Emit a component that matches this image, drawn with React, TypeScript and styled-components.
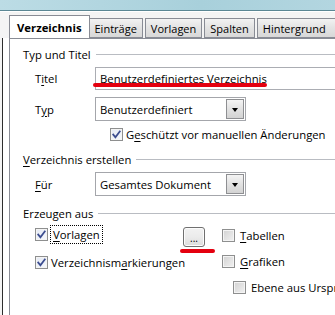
import React from "react";
import styled, { createGlobalStyle } from "styled-components";

const GlobalStyle = createGlobalStyle`
  html, body {
    margin: 0;
    padding: 0;
    background: #ffffff;
  }
  body {
    font-family: "Open Sans", "Noto Sans", sans-serif;
    font-size: 11.3px;
    color: #000;
  }
`;

const Window = styled.div`
  width: 335px;
  height: 315px;
  overflow: hidden;
  display: flex;
  flex-direction: column;
  background: #f4f4f4;
`;

const TitleBand = styled.div`
  height: 10px;
  flex: none;
  background: linear-gradient(90deg, #bcdce5 0%, #a8d0db 60%, #b3d6e0 100%);
  border-bottom: 1px solid #5b8794;
`;

const TabStrip = styled.div`
  display: flex;
  align-items: flex-end;
  height: 26px;
  padding-left: 9px;
  border-top: 1px solid #ffffff;
  background: #f4f4f4;
  flex: none;
  position: relative;
  z-index: 1;
  overflow: hidden;
`;

const Tab = styled.div<{ $active?: boolean; $first?: boolean; $last?: boolean }>`
  box-sizing: border-box;
  height: ${({ $active }) => ($active ? "24px" : "20px")};
  margin-bottom: ${({ $active }) => ($active ? "-1px" : "0")};
  margin-left: ${({ $active, $first }) => ($active || $first ? "0" : "2px")};
  padding: 0 ${({ $active }) => ($active ? "7px" : "5px")};
  padding-right: ${({ $last }) => ($last ? "12px" : undefined)};
  display: flex;
  align-items: center;
  border: 1px solid #898c95;
  border-bottom: ${({ $active }) => ($active ? "none" : "1px solid #898c95")};
  border-left-width: ${({ $first }) => ($first ? "0" : "1px")};
  background: ${({ $active }) =>
    $active ? "#ffffff" : "linear-gradient(#f2f2f2, #e4e4e4 45%, #d8d8d8)"};
  font-size: ${({ $active }) => ($active ? "11.3px" : "11px")};
  font-weight: ${({ $active }) => ($active ? 700 : 400)};
  white-space: nowrap;
  flex: none;
`;

const Body = styled.div`
  flex: 1;
  display: flex;
  min-height: 0;
`;

const LeftEdge = styled.div`
  width: 6px;
  margin-left: 2px;
  flex: none;
  border-left: 1px solid #2d2d2d;
  background: #ffffff;
`;

const Panel = styled.div`
  flex: 1;
  background: #ffffff;
  border-top: 1px solid #898c95;
  border-left: 1px solid #898c95;
  padding: 8px 0 0 13px;
  display: flex;
  flex-direction: column;
  min-width: 0;
`;

const GroupHead = styled.div<{ $gap: number }>`
  display: flex;
  align-items: center;
  height: 14px;
  margin-top: ${({ $gap }) => $gap}px;
  white-space: nowrap;

  &::after {
    content: "";
    flex: 1;
    height: 1px;
    margin-left: 5px;
    background: #b9bcc2;
  }
`;

const FieldRow = styled.div<{ $gap: number }>`
  display: flex;
  align-items: center;
  margin-top: ${({ $gap }) => $gap}px;
  padding-left: 12px;
`;

const FieldLabel = styled.span`
  width: 60px;
  flex: none;
`;

const Key = styled.span`
  text-decoration: underline;
  text-underline-offset: 2px;
`;

const InputWrap = styled.div`
  position: relative;
  flex: 1;
  margin-right: -2px;
`;

const TextInput = styled.div`
  box-sizing: border-box;
  height: 23px;
  border: 1px solid #abadb3;
  border-right: none;
  background: #fff;
  display: flex;
  align-items: center;
  padding-left: 4px;
  white-space: nowrap;
`;

const RedMark = styled.div<{ $left: number; $top: number; $width: number }>`
  position: absolute;
  left: ${({ $left }) => $left}px;
  top: ${({ $top }) => $top}px;
  width: ${({ $width }) => $width}px;
  height: 4px;
  border-radius: 2px;
  background: #e4000f;
`;

const Select = styled.div`
  box-sizing: border-box;
  width: 151px;
  height: 24px;
  border: 1px solid #a4a6ab;
  background: #fff;
  display: flex;
  align-items: center;
  padding: 0 1px 0 4px;
`;

const SelectText = styled.span`
  flex: 1;
  white-space: nowrap;
`;

const SelectButton = styled.div`
  box-sizing: border-box;
  width: 18px;
  height: 20px;
  border: 1px solid #8e8f92;
  background: linear-gradient(#f4f4f4, #e2e2e2 50%, #d3d3d3);
  display: flex;
  align-items: center;
  justify-content: center;
`;

const Arrow = styled.div`
  width: 0;
  height: 0;
  border-left: 3.5px solid transparent;
  border-right: 3.5px solid transparent;
  border-top: 4px solid #000;
  margin-top: 1px;
`;

const CheckRow = styled.div<{ $gap?: number; $indent?: number; $space?: number }>`
  display: flex;
  align-items: center;
  height: 18px;
  gap: ${({ $space }) => $space ?? 3}px;
  margin-top: ${({ $gap }) => $gap ?? 0}px;
  padding-left: ${({ $indent }) => $indent ?? 0}px;
  white-space: nowrap;
`;

const Box = styled.div<{ $checked?: boolean }>`
  box-sizing: border-box;
  width: 13px;
  height: 13px;
  flex: none;
  border: 1px solid #8e8f8f;
  background: ${({ $checked }) =>
    $checked
      ? "linear-gradient(135deg, #e4e9f4, #f6f8fc)"
      : "linear-gradient(135deg, #d2d2d2, #f1f1f1)"};
  box-shadow: inset 0 0 0 1px #f4f4f4;
  display: flex;
  align-items: center;
  justify-content: center;
`;

const Focus = styled.span`
  outline: 1px dotted #000;
  outline-offset: 0;
  padding: 1px 2px;
  line-height: 15px;
`;

const Options = styled.div`
  display: flex;
  padding-left: 12px;
  margin-top: 5px;
`;

const Column = styled.div<{ $width?: number }>`
  display: flex;
  flex-direction: column;
  gap: 10px;
  width: ${({ $width }) => ($width ? `${$width}px` : "auto")};
  flex: none;
`;

const RightColumn = styled.div`
  display: flex;
  flex-direction: column;
  gap: 8px;
  margin-top: 1px;
  margin-left: 17px;
`;

const DotsWrap = styled.div`
  position: relative;
  margin-top: 2px;
  flex: none;
`;

const DotsButton = styled.div`
  box-sizing: border-box;
  width: 22px;
  height: 20px;
  border: 1px solid #707070;
  border-radius: 3px;
  background: linear-gradient(#f2f2f2, #ebebeb 50%, #dcdcdc);
  box-shadow: inset 0 0 0 1px #fcfcfc;
  display: flex;
  align-items: flex-end;
  justify-content: center;
  font-size: 10px;
  line-height: 12px;
  padding-bottom: 2px;
`;

function Check() {
  return (
    <svg width="9" height="9" viewBox="0 0 9 9">
      <path
        d="M1.2 4.6 L3.4 7.2 L7.8 1.4"
        fill="none"
        stroke="#3b4c8f"
        strokeWidth="1.8"
        strokeLinecap="square"
      />
    </svg>
  );
}

function CheckBox({ checked }: { checked?: boolean }) {
  return <Box $checked={checked}>{checked && <Check />}</Box>;
}

export default function App() {
  return (
    <>
      <GlobalStyle />
      <Window>
        <TitleBand />
        <TabStrip>
          <Tab $active>Verzeichnis</Tab>
          <Tab $first>Einträge</Tab>
          <Tab>Vorlagen</Tab>
          <Tab>Spalten</Tab>
          <Tab $last>Hintergrund</Tab>
        </TabStrip>
        <Body>
          <LeftEdge />
          <Panel>
            <GroupHead $gap={0}>Typ und Titel</GroupHead>
            <FieldRow $gap={6}>
              <FieldLabel>
                T<Key>i</Key>tel
              </FieldLabel>
              <InputWrap>
                <TextInput>Benutzerdefiniertes Verzeichnis</TextInput>
                <RedMark $left={-2} $top={16} $width={174} />
              </InputWrap>
            </FieldRow>
            <FieldRow $gap={7}>
              <FieldLabel>
                T<Key>y</Key>p
              </FieldLabel>
              <Select>
                <SelectText>Benutzerdefiniert</SelectText>
                <SelectButton>
                  <Arrow />
                </SelectButton>
              </Select>
            </FieldRow>
            <CheckRow $gap={4} $indent={87}>
              <CheckBox checked />
              <span>
                G<Key>e</Key>schützt vor manuellen Änderungen
              </span>
            </CheckRow>
            <GroupHead $gap={9}>
              <span>
                <Key>V</Key>erzeichnis erstellen
              </span>
            </GroupHead>
            <FieldRow $gap={6}>
              <FieldLabel>
                <Key>F</Key>ür
              </FieldLabel>
              <Select>
                <SelectText>Gesamtes Dokument</SelectText>
                <SelectButton>
                  <Arrow />
                </SelectButton>
              </Select>
            </FieldRow>
            <GroupHead $gap={10}>Erzeugen aus</GroupHead>
            <Options>
              <Column $width={148}>
                <CheckRow>
                  <CheckBox checked />
                  <Focus>
                    <Key>V</Key>orlagen
                  </Focus>
                </CheckRow>
                <CheckRow>
                  <CheckBox checked />
                  <span>
                    Verzeichnism<Key>a</Key>rkierungen
                  </span>
                </CheckRow>
              </Column>
              <DotsWrap>
                <DotsButton>...</DotsButton>
                <RedMark $left={-3} $top={22} $width={35} />
              </DotsWrap>
              <RightColumn>
                <CheckRow $space={5}>
                  <CheckBox />
                  <span>
                    <Key>T</Key>abellen
                  </span>
                </CheckRow>
                <CheckRow $space={5}>
                  <CheckBox />
                  <span>
                    <Key>G</Key>rafiken
                  </span>
                </CheckRow>
                <CheckRow $indent={11} $space={5}>
                  <CheckBox />
                  <span>Ebene aus Ursprungskapitel</span>
                </CheckRow>
              </RightColumn>
            </Options>
          </Panel>
        </Body>
      </Window>
    </>
  );
}
